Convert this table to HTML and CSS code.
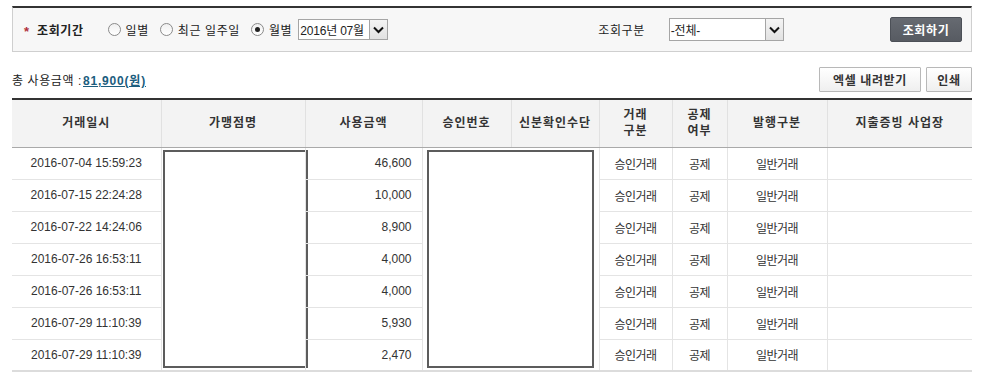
FILE: index.html
```html
<!DOCTYPE html>
<html lang="ko">
<head>
<meta charset="utf-8">
<title>사용내역 조회</title>
<link rel="stylesheet" href="styles.css">
</head>
<body>
<div class="page">
  <div class="search">
    <div class="period">
      <span class="star">*</span>
      <span class="label-b">조회기간</span>
      <span class="opt first"><span class="radio"></span><span>일별</span></span>
      <span class="opt"><span class="radio"></span><span>최근 일주일</span></span>
      <span class="opt"><span class="radio checked"></span><span>월별</span></span>
      <span class="select sel-month"><span class="sel-text">2016년 07월</span><span class="sel-arrow"><svg width="11" height="8" viewBox="0 0 11 8"><path d="M1 1.5 L5.5 6 L10 1.5" stroke="#111" stroke-width="2" fill="none"/></svg></span></span>
    </div>
    <div class="kind">
      <span class="label">조회구분</span>
      <span class="select sel-kind"><span class="sel-text">-전체-</span><span class="sel-arrow"><svg width="11" height="8" viewBox="0 0 11 8"><path d="M1 1.5 L5.5 6 L10 1.5" stroke="#111" stroke-width="2" fill="none"/></svg></span></span>
    </div>
    <button class="btn-search">조회하기</button>
  </div>

  <div class="summary">
    <div class="total">총 사용금액 :<a class="amount" href="#">81,900(원)</a></div>
    <div class="actions">
      <button class="btn btn-excel">엑셀 내려받기</button>
      <button class="btn btn-print">인쇄</button>
    </div>
  </div>

  <table class="list">
    <colgroup>
      <col class="c1"><col class="c2"><col class="c3"><col class="c4"><col class="c5"><col class="c6"><col class="c7"><col class="c8"><col class="c9">
    </colgroup>
    <thead>
      <tr>
        <th>거래일시</th>
        <th>가맹점명</th>
        <th>사용금액</th>
        <th>승인번호</th>
        <th>신분확인수단</th>
        <th>거래<br>구분</th>
        <th>공제<br>여부</th>
        <th>발행구분</th>
        <th class="last">지출증빙 사업장</th>
      </tr>
    </thead>
    <tbody>
      <tr>
        <td>2016-07-04 15:59:23</td>
        <td class="mask" rowspan="7"><div class="mask-box box1"></div></td>
        <td class="num">46,600</td>
        <td class="mask" rowspan="7" colspan="2"><div class="mask-box box2"></div></td>
        <td class="ko">승인거래</td><td class="ko">공제</td><td class="ko">일반거래</td><td class="last"></td>
      </tr>
      <tr>
        <td>2016-07-15 22:24:28</td>
        <td class="num">10,000</td>
        <td class="ko">승인거래</td><td class="ko">공제</td><td class="ko">일반거래</td><td class="last"></td>
      </tr>
      <tr>
        <td>2016-07-22 14:24:06</td>
        <td class="num">8,900</td>
        <td class="ko">승인거래</td><td class="ko">공제</td><td class="ko">일반거래</td><td class="last"></td>
      </tr>
      <tr>
        <td>2016-07-26 16:53:11</td>
        <td class="num">4,000</td>
        <td class="ko">승인거래</td><td class="ko">공제</td><td class="ko">일반거래</td><td class="last"></td>
      </tr>
      <tr>
        <td>2016-07-26 16:53:11</td>
        <td class="num">4,000</td>
        <td class="ko">승인거래</td><td class="ko">공제</td><td class="ko">일반거래</td><td class="last"></td>
      </tr>
      <tr>
        <td>2016-07-29 11:10:39</td>
        <td class="num">5,930</td>
        <td class="ko">승인거래</td><td class="ko">공제</td><td class="ko">일반거래</td><td class="last"></td>
      </tr>
      <tr>
        <td>2016-07-29 11:10:39</td>
        <td class="num">2,470</td>
        <td class="ko">승인거래</td><td class="ko">공제</td><td class="ko">일반거래</td><td class="last"></td>
      </tr>
    </tbody>
  </table>
</div>
</body>
</html>
```

FILE: styles.css
```css
* { box-sizing: border-box; margin: 0; padding: 0; }
body {
  font-family: "Liberation Sans", "Noto Sans CJK KR", sans-serif;
  font-size: 12px;
  color: #333;
  background: #fff;
}
.page { padding: 6px 0 0 12px; width: 972px; }

/* search box */
.search {
  width: 960px;
  height: 46px;
  border: 1px solid #cfcfcf;
  border-top: 2px solid #333;
  background: #f7f7f7;
  display: flex;
  align-items: center;
  padding: 0 9px 0 11px;
}
.period { display: flex; align-items: center; }
.star { color: #b0303a; font-weight: bold; font-size: 13px; width: 6px; margin-right: 7px; line-height: 1; position: relative; top: 2px; }
.label-b { font-weight: bold; color: #222; letter-spacing: 0.6px; }
.opt { display: flex; align-items: center; gap: 5px; margin-left: 11px; color: #222; letter-spacing: 0.6px; }
.opt.first { margin-left: 24px; }
.radio {
  width: 13px; height: 13px; border-radius: 50%;
  border: 1px solid #8a8a8a;
  background: linear-gradient(#f0f0f0, #fff);
  display: inline-flex; align-items: center; justify-content: center;
}
.radio.checked::after { content: ""; width: 5px; height: 5px; border-radius: 50%; background: #222; }
.select {
  display: flex; align-items: stretch;
  border: 1px solid #a5a5a5;
  background: #fff;
  color: #222;
}
.sel-text { flex: 1; display: flex; align-items: center; padding-left: 1px; letter-spacing: -0.2px; }
.sel-arrow {
  width: 18px;
  border-left: 1px solid #a5a5a5;
  background: linear-gradient(#f4f4f4, #e2e2e2);
  display: flex; align-items: center; justify-content: center;
}
.sel-month { width: 90px; height: 21px; margin-left: 6px; }
.kind { display: flex; align-items: center; margin-left: 210px; }
.label { color: #222; margin-right: 24px; letter-spacing: 0.6px; }
.sel-kind { width: 115px; height: 23px; }
.btn-search {
  margin-left: auto;
  width: 72px; height: 25px;
  border: 1px solid #4c5057;
  border-radius: 2px;
  background: linear-gradient(#666a71, #575b62);
  color: #fff;
  font-family: inherit;
  font-weight: bold;
  font-size: 12px;
  letter-spacing: 0.6px;
}

/* summary */
.summary {
  width: 960px;
  height: 25px;
  margin-top: 15px;
  display: flex;
  align-items: center;
  justify-content: space-between;
}
.total { color: #222; letter-spacing: 0.6px; }
.amount { color: #1b5d7e; font-weight: bold; text-decoration: underline; margin-left: 1px; letter-spacing: 0.8px; }
.actions { display: flex; gap: 5px; }
.btn {
  height: 25px;
  border: 1px solid #b8b8b8;
  background: linear-gradient(#ffffff, #efefef);
  color: #333;
  font-family: inherit;
  font-weight: bold;
  font-size: 12px;
  letter-spacing: 0.6px;
  border-radius: 1px;
}
.btn-excel { width: 102px; }
.btn-print { width: 46px; }

/* table */
.list {
  margin-top: 6px;
  width: 960px;
  border-collapse: collapse;
  table-layout: fixed;
  border-top: 2px solid #333;
}
.c1 { width: 149px; } .c2 { width: 144px; } .c3 { width: 117px; }
.c4 { width: 89px; } .c5 { width: 88px; } .c6 { width: 73px; }
.c7 { width: 55px; } .c8 { width: 100px; } .c9 { width: 145px; }
.list th {
  height: 48px;
  background: #f3f3f3;
  border-right: 1px solid #e1e1e1;
  border-bottom: 1px solid #a9a9a9;
  font-weight: bold;
  font-size: 12px;
  color: #333;
  line-height: 16px;
  letter-spacing: 1px;
}
.list td {
  height: 32px;
  border-right: 1px solid #e4e4e4;
  border-bottom: 1px solid #e4e4e4;
  text-align: center;
  color: #333;
}
.list .last { border-right: none; }
.list tbody tr:last-child td { border-bottom: 2px solid #dcdcdc; }
.list td.num { text-align: right; padding-right: 10px; }
.list td.ko { letter-spacing: -0.6px; }
.list td.mask { vertical-align: top; padding: 2px 0 0 0; border-bottom: 2px solid #dcdcdc; }
.mask-box { height: 218px; border: 2px solid #5c5c5c; background: #fff; }
.box1 { width: 145px; margin-left: 1px; }
.box2 { width: 167px; margin-left: 4px; }
```
